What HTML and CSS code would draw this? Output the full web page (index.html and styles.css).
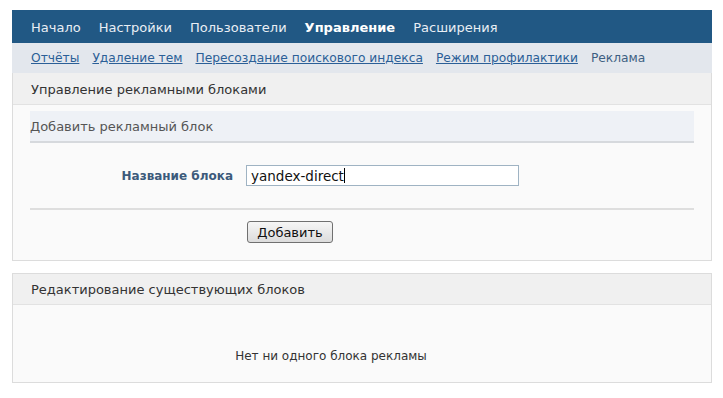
FILE: index.html
```html
<!DOCTYPE html>
<html lang="ru">
<head>
<meta charset="utf-8">
<title>Управление рекламными блоками</title>
<link rel="stylesheet" href="styles.css">
</head>
<body>
<div class="topnav">
  <span class="nav-item">Начало</span>
  <span class="nav-item">Настройки</span>
  <span class="nav-item">Пользователи</span>
  <span class="nav-item active">Управление</span>
  <span class="nav-item">Расширения</span>
</div>
<div class="subnav">
  <a class="sub-link" href="#">Отчёты</a>
  <a class="sub-link" href="#">Удаление тем</a>
  <a class="sub-link" href="#">Пересоздание поискового индекса</a>
  <a class="sub-link" href="#">Режим профилактики</a>
  <span class="sub-current">Реклама</span>
</div>
<div class="panel">
  <div class="panel-head">Управление рекламными блоками</div>
  <div class="panel-body">
    <div class="inner-head">Добавить рекламный блок</div>
    <div class="form-grid field-row">
      <label class="form-label" for="name">Название блока</label>
      <div class="input-box"><span class="input-text">yandex-direct</span><span class="caret"></span></div>
    </div>
    <div class="sep"></div>
    <div class="form-grid btn-row">
      <span></span>
      <button class="btn" type="button">Добавить</button>
    </div>
  </div>
</div>
<div class="panel panel2">
  <div class="panel-head">Редактирование существующих блоков</div>
  <div class="panel-body2">Нет ни одного блока рекламы</div>
</div>
</body>
</html>
```
FILE: styles.css
```css
html, body { margin: 0; padding: 0; background: #ffffff; }
body {
  padding: 10px 11px 0 12px;
  font-family: "DejaVu Sans", Verdana, sans-serif;
  font-size: 13px;
  color: #333;
}
.topnav {
  height: 33px;
  background: #215884;
  display: flex;
  align-items: center;
  gap: 18px;
  padding-left: 19px;
}
.nav-item { color: #e9eef4; font-size: 13px; padding-top: 1px; }
.nav-item.active { font-weight: bold; color: #ffffff; }
.subnav {
  height: 30px;
  background: #e3e7ed;
  display: flex;
  align-items: center;
  gap: 13px;
  padding-left: 19px;
  font-size: 12.25px;
}
.sub-link { color: #2b5f97; text-decoration: underline; }
.sub-current { color: #3d5f82; }
.panel {
  border: 1px solid #dcdcdc;
  border-top: none;
  background: #fafafa;
}
.panel-head {
  height: 32px;
  background: #f0f0f0;
  border-bottom: 1px solid #e2e2e2;
  display: flex;
  align-items: center;
  padding-left: 18px;
  color: #333;
  padding-top: 1px;
  box-sizing: border-box;
}
.panel-body { padding: 6px 17px 17px 17px; }
.inner-head {
  height: 30px;
  background: #eef1f6;
  border-bottom: 2px solid #d6d9dd;
  display: flex;
  align-items: center;
  color: #555;
}
.form-grid {
  display: grid;
  grid-template-columns: 203px 1fr;
  column-gap: 13px;
  align-items: center;
}
.field-row { margin-top: 22px; margin-bottom: 22px; }
.form-label {
  text-align: right;
  font-weight: bold;
  font-size: 12px;
  color: #3c5a7b;
}
.input-box {
  width: 267px;
  height: 19px;
  border: 1px solid #9fb3c3;
  background: #fff;
  display: flex;
  align-items: center;
  padding-left: 4px;
  color: #111;
  font-size: 13.5px;
}
.caret { width: 1px; height: 15px; background: #000; }
.sep { height: 0; border-top: 2px solid #dedede; }
.btn-row { margin-top: 11px; }
.btn {
  justify-self: start;
  margin-left: 1px;
  width: 86px;
  height: 22px;
  border: 1px solid #707070;
  border-radius: 3px;
  background: linear-gradient(#f6f6f6, #dcdcdc);
  font-family: "DejaVu Sans", Verdana, sans-serif;
  font-size: 13px;
  color: #111;
  padding: 0;
}
.panel2 { margin-top: 12px; border-top: 1px solid #dcdcdc; }
.panel2 .panel-head { height: 31px; }
.panel-body2 {
  height: 77px;
  box-sizing: border-box;
  display: flex;
  align-items: flex-end;
  justify-content: center;
  padding: 0 62px 20px 0;
  line-height: 1;
  color: #333;
  font-size: 12px;
}
```
